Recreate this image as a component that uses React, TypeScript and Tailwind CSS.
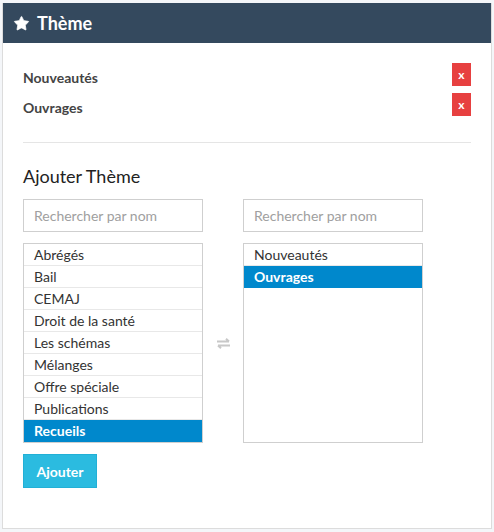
import { Star } from 'lucide-react'

const available = [
  'Abrégés',
  'Bail',
  'CEMAJ',
  'Droit de la santé',
  'Les schémas',
  'Mélanges',
  'Offre spéciale',
  'Publications',
  'Recueils',
]

const chosen = ['Nouveautés', 'Ouvrages']

function ListBox({ items, active }: { items: string[]; active: string }) {
  return (
    <div className="h-[200px] w-[180px] overflow-hidden border border-[#cfcfcf] bg-white">
      {items.map((item) => (
        <div
          key={item}
          className={
            item === active
              ? 'h-[22px] bg-[#0088cc] px-[10px] text-[14px] font-bold leading-[21px] text-white'
              : 'h-[22px] border-b border-[#e8e8e8] px-[10px] text-[14px] leading-[21px] text-[#333]'
          }
        >
          {item}
        </div>
      ))}
    </div>
  )
}

export default function App() {
  return (
    <div className="min-h-[532px] bg-[#f4f6f9] px-[2px] pt-[3px] font-['Lato','Liberation_Sans',sans-serif]">
      <div className="w-[490px] border-x border-b border-[#dcdcdc] bg-white">
        <div className="flex h-[40px] items-center gap-[7px] bg-[#34495e] px-[10px] text-white">
          <Star className="h-[17px] w-[17px]" fill="currentColor" strokeWidth={1} />
          <span className="text-[18px] font-bold">Thème</span>
        </div>

        <div className="px-[20px] pb-[40px] pt-[20px]">
          <div className="flex flex-col gap-[7px]">
            {chosen.map((name) => (
              <div key={name} className="flex h-[23px] items-start justify-between">
                <span className="pt-[6px] text-[14px] font-bold leading-[17px] text-[#444]">{name}</span>
                <button className="flex h-[23px] w-[19px] items-center justify-center bg-[#e74040] text-[12px] font-bold text-white">
                  x
                </button>
              </div>
            ))}
          </div>

          <div className="mt-[26px] border-t border-[#e5e5e5]" />

          <h3 className="mt-[20px] text-[18px] leading-[26px] text-[#222]">Ajouter Thème</h3>

          <div className="mt-[10px] flex">
            <div className="flex flex-col gap-[11px]">
              <input
                className="h-[33px] w-[180px] border border-[#cfcfcf] px-[10px] text-[14px] placeholder:text-[#a0a0a0] outline-none"
                placeholder="Rechercher par nom"
              />
              <ListBox items={available} active="Recueils" />
            </div>
            <div className="flex w-[40px] items-center justify-center pt-[44px]">
              <svg width="15" height="11" viewBox="0 0 15 11" fill="none" stroke="#c8c8c8" strokeWidth="2">
                <path d="M1 3.5h12M10 0.8l3 2.7" />
                <path d="M14 7.5H2M5 10.2L2 7.5" />
              </svg>
            </div>
            <div className="flex flex-col gap-[11px]">
              <input
                className="h-[33px] w-[180px] border border-[#cfcfcf] px-[10px] text-[14px] placeholder:text-[#a0a0a0] outline-none"
                placeholder="Rechercher par nom"
              />
              <ListBox items={chosen} active="Ouvrages" />
            </div>
          </div>

          <button className="mt-[11px] h-[34px] w-[74px] border border-[#22b0d6] bg-[#2bbbe0] text-[14px] font-bold text-white">
            Ajouter
          </button>
        </div>
      </div>
    </div>
  )
}
